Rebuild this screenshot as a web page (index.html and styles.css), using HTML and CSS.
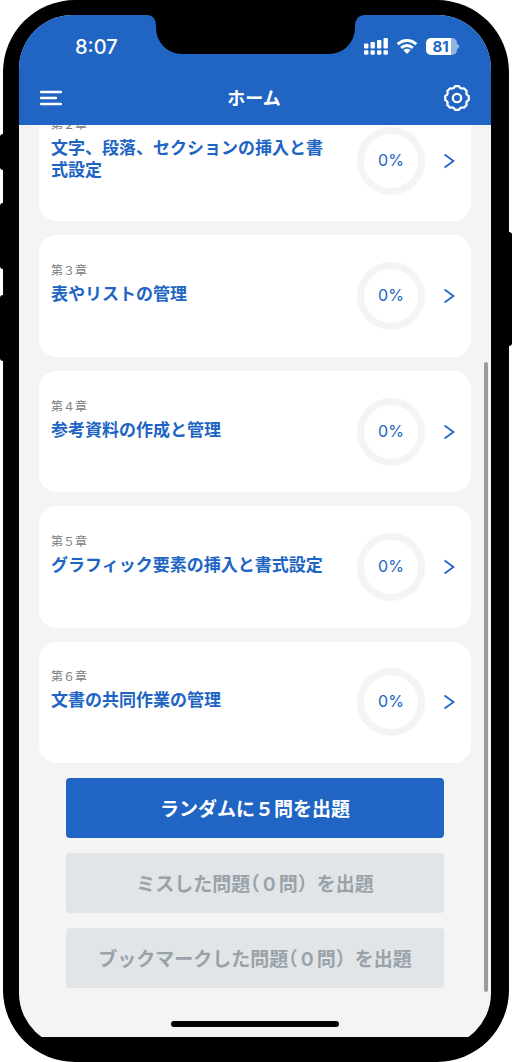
FILE: index.html
```html
<!DOCTYPE html>
<html lang="ja">
<head>
<meta charset="utf-8">
<meta name="viewport" content="width=device-width, initial-scale=1">
<title>ホーム</title>
<link rel="stylesheet" href="styles.css">
</head>
<body>
<div class="phone">
  <span class="key key-mute"></span>
  <span class="key key-up"></span>
  <span class="key key-down"></span>
  <span class="key key-power"></span>
  <div class="bezel">
    <div class="screen">
      <svg class="notch" width="216" height="40" viewBox="0 0 216 40" aria-hidden="true"><path d="M0 0Q8 1 8 11V13A26 26 0 0 0 34 39H181A26 26 0 0 0 207 13V11Q207 1 216 0Z"/></svg>
      <header class="top">
        <div class="status">
          <span class="time">8:07</span>
          <div class="indicators">
            <svg width="24" height="17" viewBox="0 0 24 17" fill="#fff" aria-hidden="true"><rect x="0" y="5.500" width="4.400" height="5" rx="1"/><rect x="6.500" y="4" width="4.400" height="6.500" rx="1"/><rect x="13" y="2" width="4.400" height="8.500" rx="1"/><rect x="19.500" y="0" width="4.400" height="10.500" rx="1"/><rect x="0" y="12.300" width="4.400" height="4.400" rx="1.200"/><rect x="6.500" y="12.300" width="4.400" height="4.400" rx="1.200"/><rect x="13" y="12.300" width="4.400" height="4.400" rx="1.200"/><rect x="19.500" y="12.300" width="4.400" height="4.400" rx="1.200"/></svg>
            <svg width="22" height="17" viewBox="0 0 22 17" fill="none" stroke="#fff" stroke-width="2.900" aria-hidden="true"><path d="M1.700 6.300A13.200 13.200 0 0 1 20.300 6.300M5.200 9.900A8.300 8.300 0 0 1 16.800 9.900"/><path d="M7.500 12.300A4.900 4.900 0 0 1 14.500 12.300L11 16Z" fill="#fff" stroke="none"/></svg>
            <div class="battery"><span>81</span></div>
          </div>
        </div>
        <nav class="nav">
          <button class="icon-button" type="button" aria-label="メニュー">
            <svg width="24" height="16" viewBox="0 0 24 16" fill="none" stroke="#fff" stroke-width="2.300" stroke-linecap="round" aria-hidden="true"><path d="M2 2H22M2 8H17M2 14H22"/></svg>
          </button>
          <h1>ホーム</h1>
          <button class="icon-button" type="button" aria-label="設定">
            <svg width="28" height="28" viewBox="-14 -14 28 28" fill="none" stroke="#fff" stroke-width="2.200" stroke-linejoin="round" aria-hidden="true"><path d="M11.800 -1.900V1.900Q8.400 3.500 9.700 6.900L6.900 9.700Q3.500 8.400 1.900 11.800H-1.900Q-3.500 8.400 -6.900 9.700L-9.700 6.900Q-8.400 3.500 -11.800 1.900V-1.900Q-8.400 -3.500 -9.700 -6.900L-6.900 -9.700Q-3.500 -8.400 -1.900 -11.800H1.900Q3.500 -8.400 6.900 -9.700L9.700 -6.900Q8.400 -3.500 11.800 -1.900Z"/><circle r="4.200"/></svg>
          </button>
        </nav>
      </header>
      <main class="content">
        <div class="chapters">
          <a class="card" href="#chapter2">
            <div class="card-text"><p>第２章</p><h2>文字、段落、セクションの挿入と書式設定</h2></div>
            <span class="ring">0%</span>
            <svg class="chevron" width="12" height="16" viewBox="0 0 12 16" aria-hidden="true"><path d="M1.500 1.500L10.500 8L1.500 14.500"/></svg>
          </a>
          <a class="card" href="#chapter3">
            <div class="card-text"><p>第３章</p><h2>表やリストの管理</h2></div>
            <span class="ring">0%</span>
            <svg class="chevron" width="12" height="16" viewBox="0 0 12 16" aria-hidden="true"><path d="M1.500 1.500L10.500 8L1.500 14.500"/></svg>
          </a>
          <a class="card" href="#chapter4">
            <div class="card-text"><p>第４章</p><h2>参考資料の作成と管理</h2></div>
            <span class="ring">0%</span>
            <svg class="chevron" width="12" height="16" viewBox="0 0 12 16" aria-hidden="true"><path d="M1.500 1.500L10.500 8L1.500 14.500"/></svg>
          </a>
          <a class="card" href="#chapter5">
            <div class="card-text"><p>第５章</p><h2>グラフィック要素の挿入と書式設定</h2></div>
            <span class="ring">0%</span>
            <svg class="chevron" width="12" height="16" viewBox="0 0 12 16" aria-hidden="true"><path d="M1.500 1.500L10.500 8L1.500 14.500"/></svg>
          </a>
          <a class="card" href="#chapter6">
            <div class="card-text"><p>第６章</p><h2>文書の共同作業の管理</h2></div>
            <span class="ring">0%</span>
            <svg class="chevron" width="12" height="16" viewBox="0 0 12 16" aria-hidden="true"><path d="M1.500 1.500L10.500 8L1.500 14.500"/></svg>
          </a>
        </div>
        <div class="actions">
          <button class="action" type="button">ランダムに５問を出題</button>
          <button class="action" type="button" disabled>ミスした問題<span class="open-paren">（</span>０問）を出題</button>
          <button class="action" type="button" disabled>ブックマークした問題<span class="open-paren">（</span>０問）を出題</button>
        </div>
        <span class="scrollbar"></span>
      </main>
      <div class="home-bar"><span></span></div>
    </div>
  </div>
</div>
</body>
</html>
```
FILE: styles.css
```css
* {
  box-sizing: border-box;
  margin: 0;
}

body {
  background: #fff;
  color: #2065c3;
  font-family: "Noto Sans CJK JP", sans-serif;
}

.phone {
  position: relative;
  display: flex;
  min-height: 100vh;
  margin: 0 3px;
  padding: 15px 18px 25px 16px;
  background: #000;
  border-radius: 72px;
}

.key {
  position: absolute;
  width: 8px;
  background: #000;
  border-radius: 3px;
}

.key-mute { left: -3px; top: 134px; height: 36px; }
.key-up { left: -3px; top: 203px; height: 66px; }
.key-down { left: -3px; top: 295px; height: 66px; }
.key-power { right: -3px; top: 232px; height: 114px; }

.bezel {
  display: flex;
  flex: 1;
  min-width: 0;
  overflow: hidden;
}

/* The lower edge runs under the bezel, which trims the rounded corners. */
.screen {
  position: relative;
  display: flex;
  flex: 1;
  flex-direction: column;
  min-width: 0;
  margin-bottom: -10px;
  padding-bottom: 10px;
  overflow: hidden;
  background: #f4f4f4;
  border-radius: 54px;
}

.notch {
  position: absolute;
  z-index: 3;
  top: 0;
  left: 50%;
  margin-left: -107px;
}

.top {
  position: relative;
  z-index: 2;
  padding-bottom: 7px;
  background: #2065c3;
  color: #fff;
}

.status {
  display: flex;
  align-items: center;
  justify-content: space-between;
  height: 63px;
  padding: 0 32px 0 56px;
}

.time {
  font: 500 20px/24px Inter, sans-serif;
}

.indicators {
  display: flex;
  align-items: center;
  gap: 8px;
}

.battery {
  position: relative;
  width: 31px;
  height: 17px;
  margin-right: 2px;
  padding-right: 2px;
  background: linear-gradient(90deg, #fff 81%, #93b3e2 81%);
  border-radius: 5px;
  color: #2065c3;
  font: 700 15px/17px Inter, sans-serif;
  text-align: center;
}

.battery::after {
  position: absolute;
  top: 6px;
  right: -2px;
  width: 2px;
  height: 5px;
  background: #93b3e2;
  border-radius: 0 2px 2px 0;
  content: "";
}

.nav {
  display: flex;
  align-items: center;
  justify-content: space-between;
  height: 40px;
  padding: 0 20px 0 18px;
}

.nav h1 {
  padding-bottom: 2px;
  font-size: 18px;
  line-height: 24px;
}

.icon-button {
  display: grid;
  place-items: center;
  width: 28px;
  height: 28px;
  padding: 0;
  background: none;
  border: 0;
}

.content {
  position: relative;
  display: flex;
  flex: 1;
  flex-direction: column;
  gap: 15px;
}

.chapters {
  display: flex;
  flex: 1;
  flex-direction: column;
  gap: 14px;
  margin-top: -25px;
  padding: 0 20px;
}

.card {
  display: flex;
  flex: 1;
  align-items: center;
  padding: 0 16px 0 12px;
  background: #fff;
  border-radius: 18px;
  color: #2065c3;
  text-decoration: none;
}

.card-text {
  flex: 1;
  padding: 0 24px 28px 0;
}

.card-text p {
  color: #808080;
  font-size: 12px;
  line-height: 20px;
}

.card-text h2 {
  padding-top: 2px;
  font-size: 17px;
  line-height: 22px;
}

.ring {
  display: grid;
  place-items: center;
  width: 68px;
  height: 68px;
  margin-right: 18px;
  padding-bottom: 2px;
  border: 7px solid #f4f4f4;
  border-radius: 50%;
  font: 400 16px/20px Inter, sans-serif;
}

.chevron {
  fill: none;
  stroke: #2065c3;
  stroke-width: 1.8;
}

.actions {
  display: flex;
  flex-direction: column;
  gap: 15px;
  padding: 0 47px;
}

.action {
  height: 60px;
  background: #2065c3;
  border: 0;
  border-radius: 4px;
  color: #fff;
  font: 700 19px/28px "Noto Sans CJK JP", sans-serif;
}

.action:disabled {
  background: #e1e5e8;
  color: #9aa2a9;
}

.open-paren {
  font-feature-settings: "halt";
}

.scrollbar {
  position: absolute;
  right: 3px;
  bottom: -4px;
  width: 4px;
  height: 73%;
  background: #9c9c9c;
  border-radius: 2px;
}

.home-bar {
  display: flex;
  justify-content: center;
  padding: 33px 0 10px;
}

.home-bar span {
  width: 168px;
  height: 6px;
  background: #000;
  border-radius: 3px;
}
```
